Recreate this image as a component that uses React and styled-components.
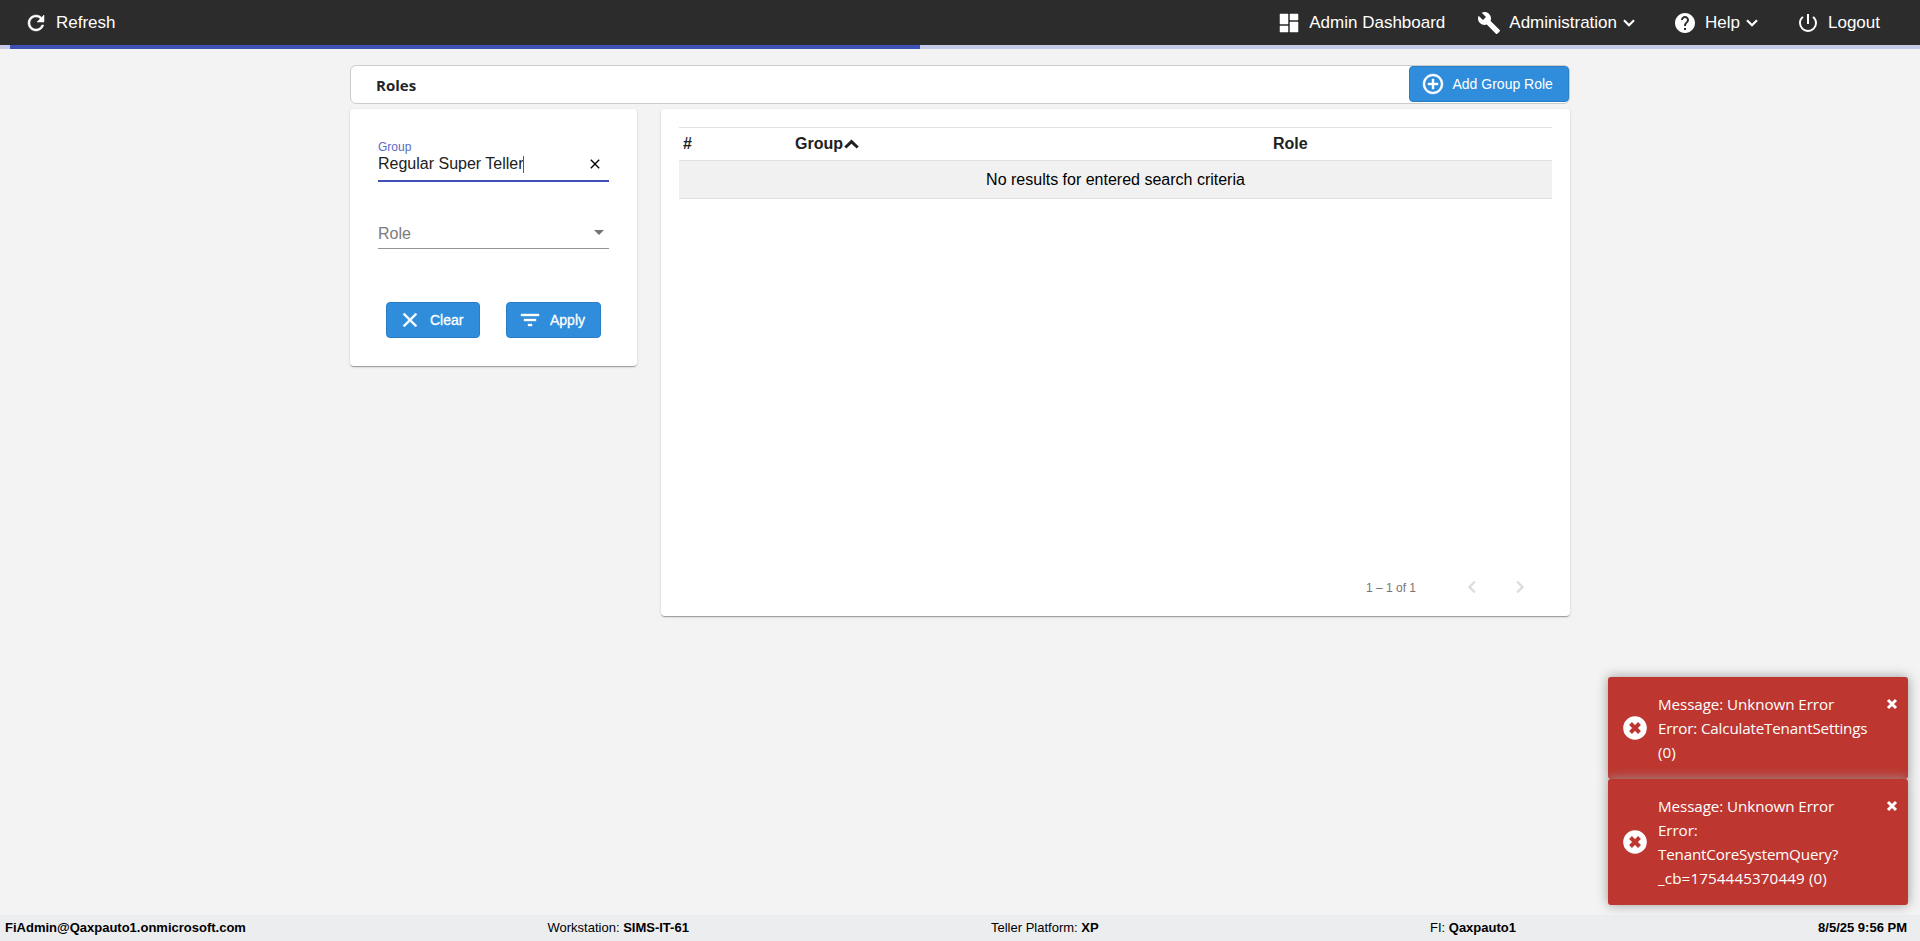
import React from 'react';
import styled, { createGlobalStyle } from 'styled-components';
import {
  MdRefresh, MdDashboard, MdBuild, MdHelp, MdPowerSettingsNew, MdAddCircleOutline,
  MdClose, MdFilterList, MdArrowDropDown, MdChevronLeft, MdChevronRight,
} from 'react-icons/md';

const Global = createGlobalStyle`
  *, *::before, *::after { box-sizing: border-box; }
  body { margin: 0; background: #f3f3f3; font-family: "Liberation Sans", Arial, sans-serif; font-size: 16px; color: #212121; }
  svg path[fill="none"] { stroke: none; }
`;

const Page = styled.div`
  height: 941px;
  display: flex;
  flex-direction: column;
  overflow: hidden;
`;

const Header = styled.header`
  flex: none;
  height: 45px;
  display: flex;
  align-items: center;
  padding: 0 40px 0 24px;
  background: #2c2c2c;
  color: #fff;
`;

const NavItem = styled.a`
  display: flex;
  align-items: center;
  height: 45px;
  font-size: 17px;
  line-height: 20px;
  white-space: nowrap;
  margin-left: ${(p) => p.$before || 0}px;
  > svg:first-child {
    flex: none;
    stroke: #fff;
    stroke-width: ${(p) => (p.$heavy ? 0.5 : 0)};
  }
`;

const NavLabel = styled.span`
  margin-left: 8px;
`;

const Spacer = styled.div`
  flex: 1;
`;

const NavArrow = styled.svg`
  width: 12px;
  height: 8px;
  margin: 1px 0 0 6px;
  fill: none;
  stroke: #fff;
  stroke-width: 2.2;
`;

const Progress = styled.div`
  flex: none;
  height: 4px;
  padding-left: 10px;
  background: #c5cae9;
`;

const ProgressBar = styled.div`
  width: 910px;
  height: 4px;
  background: #3f51b5;
`;

const Main = styled.main`
  flex: 1;
  width: 1220px;
  margin-left: 350px;
  padding-top: 16px;
`;

const TitleBar = styled.div`
  display: flex;
  justify-content: space-between;
  align-items: flex-start;
  width: 1220px;
  height: 39px;
  border: 1px solid #ccc;
  border-radius: 6px;
  background: #fff;
`;

const Title = styled.h1`
  margin: 0;
  padding-left: 25px;
  font: bold 15px/39px "Open Sans", "Noto Sans", sans-serif;
  color: #212529;
`;

const Button = styled.button`
  display: flex;
  align-items: center;
  width: ${(p) => p.$width}px;
  height: 36px;
  padding: 0 0 0 ${(p) => p.$pad}px;
  gap: ${(p) => p.$gap || 8}px;
  border: 1px solid #2a7ec4;
  border-radius: 4px;
  background: #308ddc;
  color: #fff;
  font: 14px/20px "Liberation Sans", Arial, sans-serif;
  -webkit-text-stroke: ${(p) => (p.$strong ? '0.3px #fff' : '0')};
  white-space: nowrap;
  svg { flex: none; stroke: #fff; stroke-width: 0.4; }
`;

const Columns = styled.div`
  display: flex;
  align-items: flex-start;
  justify-content: space-between;
  margin-top: 5px;
`;

const Card = styled.section`
  display: flex;
  flex-direction: column;
  width: ${(p) => p.$width}px;
  height: ${(p) => p.$height}px;
  padding: ${(p) => p.$padding};
  border-radius: 4px;
  background: #fff;
  box-shadow: 0 2px 1px -1px rgba(0,0,0,.2), 0 1px 1px 0 rgba(0,0,0,.14), 0 1px 3px 0 rgba(0,0,0,.12);
`;

const Field = styled.div`
  flex: none;
  height: ${(p) => p.$height}px;
  margin-top: ${(p) => p.$before || 0}px;
  border-bottom: ${(p) => (p.$active ? '2px solid #3f51b5' : '1px solid #949494')};
`;

const FieldLabel = styled.div`
  height: 15px;
  font-size: 12px;
  line-height: 17px;
  color: #5b6bc4;
`;

const FieldRow = styled.div`
  display: flex;
  align-items: center;
  justify-content: space-between;
  height: 20px;
  margin-right: ${(p) => p.$right}px;
  color: ${(p) => (p.$muted ? '#7b7b7b' : '#212121')};
`;

const FieldValue = styled.span`
  display: flex;
  align-items: center;
  line-height: 20px;
  white-space: nowrap;
`;

const DropIcon = styled(MdArrowDropDown)`
  width: 24px;
  height: 24px;
  margin-bottom: 4px;
  color: #757575;
`;

const Caret = styled.i`
  width: 1px;
  height: 17px;
  margin-left: -1px;
  background: #3f51b5;
`;

const Actions = styled.div`
  display: flex;
  gap: 26px;
  margin: 53px 0 0 8px;
`;

const Table = styled.table`
  width: 873px;
  border-collapse: collapse;
  table-layout: fixed;
`;

const HeadCell = styled.th`
  width: ${(p) => p.$width}px;
  height: 33px;
  padding: 0 0 0 4px;
  border-top: 1px solid #dee2e6;
  border-bottom: 1px solid #dee2e6;
  text-align: left;
  line-height: 20px;
`;

const SortArrow = styled.svg`
  width: 15px;
  height: 10px;
  margin-left: 1px;
  fill: none;
  stroke: #212121;
  stroke-width: 3;
`;

const EmptyCell = styled.td`
  height: 38px;
  padding: 0;
  border-bottom: 1px solid #dee2e6;
  background: #f1f1f1;
  text-align: center;
  line-height: 20px;
  color: #000;
`;

const Paginator = styled.div`
  display: flex;
  align-items: center;
  justify-content: flex-end;
  height: 24px;
  margin-top: auto;
  padding-right: 20px;
  font-size: 12px;
  line-height: 14px;
  color: #757575;
`;

const PageRange = styled.span`
  padding-top: 1px;
`;

const PageArrows = styled.div`
  display: flex;
  gap: 24px;
  margin-left: 44px;
  svg { color: #dcdcdc; stroke: #dcdcdc; stroke-width: 0.4; }
`;

const Footer = styled.footer`
  flex: none;
  display: grid;
  grid-template-columns: 542.5px 443.5px 439px 1fr auto;
  height: 26px;
  padding: 0 13px 0 5px;
  background: #ecedef;
  color: #000;
  font-size: 13px;
  line-height: 25px;
  white-space: nowrap;
`;

const ToastStack = styled.aside`
  position: absolute;
  right: 12px;
  bottom: 36px;
  width: 300px;
`;

const Toast = styled.div`
  display: flex;
  align-items: center;
  padding: 15px 9px 15px 15px;
  border-radius: 3px;
  background: #bd362f;
  box-shadow: 0 0 12px #999;
  color: #fff;
`;

const ToastText = styled.div`
  flex: 1;
  margin-left: 11px;
  font: 15.2px/24px "Open Sans", "Noto Sans", sans-serif;
  white-space: nowrap;
`;

const ToastLine = styled.div`
  letter-spacing: ${(p) => p.$spacing}px;
`;

const ToastIcon = styled.svg`
  flex: none;
  width: 24px;
  height: 24px;
`;

const ToastClose = styled.svg`
  flex: none;
  align-self: flex-start;
  width: 14px;
  height: 14px;
  margin-top: 5px;
`;

const DownArrow = () => (
  <NavArrow viewBox="0 0 12 8"><path d="M1 1.2 6 6.2l5-5" /></NavArrow>
);

const toasts = [
  [['Message: Unknown Error', -0.08], ['Error: CalculateTenantSettings', -0.17], ['(0)', 0]],
  [['Message: Unknown Error', -0.08], ['Error:', -0.08], ['TenantCoreSystemQuery?', -0.18], ['_cb=1754445370449 (0)', 0.12]],
];

export default function App() {
  return (
    <Page>
      <Global />
      <Header>
        <NavItem $heavy><MdRefresh size={24} /><NavLabel>Refresh</NavLabel></NavItem>
        <Spacer />
        <NavItem $heavy><MdDashboard size={24} /><NavLabel>Admin Dashboard</NavLabel></NavItem>
        <NavItem $before={32}><MdBuild size={24} /><NavLabel>Administration</NavLabel><DownArrow /></NavItem>
        <NavItem $before={38}><MdHelp size={24} /><NavLabel>Help</NavLabel><DownArrow /></NavItem>
        <NavItem $before={38}><MdPowerSettingsNew size={24} /><NavLabel>Logout</NavLabel></NavItem>
      </Header>
      <Progress><ProgressBar /></Progress>
      <Main>
        <TitleBar>
          <Title>Roles</Title>
          <Button $width={160} $pad={11} $gap={7.5}><MdAddCircleOutline size={24} />Add Group Role</Button>
        </TitleBar>
        <Columns>
          <Card $width={287} $height={257} $padding="30px 28px 0">
            <Field $height={43} $active>
              <FieldLabel>Group</FieldLabel>
              <FieldRow $right={6}>
                <FieldValue>Regular Super Teller<Caret /></FieldValue>
                <MdClose size={16} color="#000" />
              </FieldRow>
            </Field>
            <Field $before={42} $height={25}>
              <FieldRow $muted $right={-2}>
                <FieldValue>Role</FieldValue>
                <DropIcon />
              </FieldRow>
            </Field>
            <Actions>
              <Button $strong $width={94} $pad={11}><MdClose size={24} />Clear</Button>
              <Button $strong $width={95} $pad={11}><MdFilterList size={24} />Apply</Button>
            </Actions>
          </Card>
          <Card $width={909} $height={507} $padding="18px 18px 17px">
            <Table>
              <thead>
                <tr>
                  <HeadCell $width={112}>#</HeadCell>
                  <HeadCell $width={478}>Group<SortArrow viewBox="0 0 15 10"><path d="M1.3 8.5 7.5 2.6l6.2 5.9" /></SortArrow></HeadCell>
                  <HeadCell $width={283}>Role</HeadCell>
                </tr>
              </thead>
              <tbody>
                <tr><EmptyCell colSpan={3}>No results for entered search criteria</EmptyCell></tr>
              </tbody>
            </Table>
            <Paginator>
              <PageRange>1 – 1 of 1</PageRange>
              <PageArrows><MdChevronLeft size={24} /><MdChevronRight size={24} /></PageArrows>
            </Paginator>
          </Card>
        </Columns>
      </Main>
      <Footer>
        <b>FiAdmin@Qaxpauto1.onmicrosoft.com</b>
        <span>Workstation: <b>SIMS-IT-61</b></span>
        <span>Teller Platform: <b>XP</b></span>
        <span>FI: <b>Qaxpauto1</b></span>
        <b>8/5/25 9:56 PM</b>
      </Footer>
      <ToastStack>
        {toasts.map((lines, i) => (
          <Toast key={i}>
            <ToastIcon viewBox="0 0 24 24">
              <circle cx="12" cy="12" r="11.8" fill="#fff" />
              <path d="m7.5 7.5 9 9m0-9-9 9" stroke="#bd362f" strokeWidth="4" />
            </ToastIcon>
            <ToastText>{lines.map(([text, spacing]) => <ToastLine key={text} $spacing={spacing}>{text}</ToastLine>)}</ToastText>
            <ToastClose viewBox="0 0 14 14"><path d="m3 3 8 8m0-8-8 8" stroke="#fff" strokeWidth="3" /></ToastClose>
          </Toast>
        ))}
      </ToastStack>
    </Page>
  );
}
